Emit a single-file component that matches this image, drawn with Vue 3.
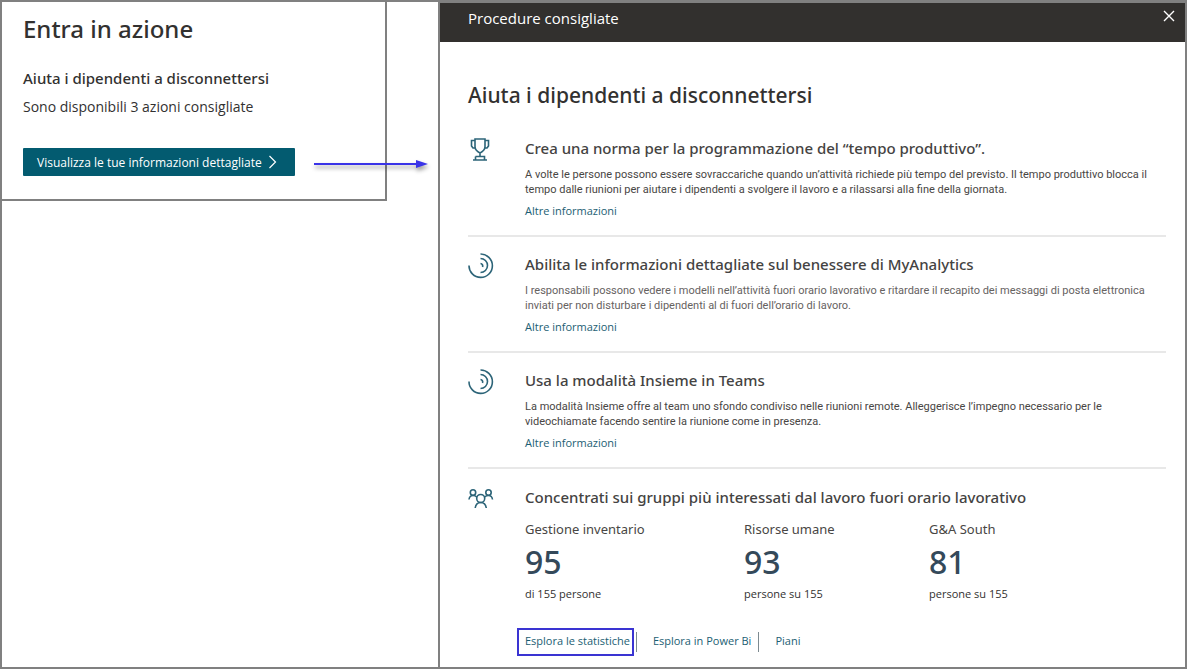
<script setup>
const practices = [
  {
    icon: 'trophy',
    title: 'Crea una norma per la programmazione del “tempo produttivo”.',
    text: 'A volte le persone possono essere sovraccariche quando un’attività richiede più tempo del previsto. Il tempo produttivo blocca il tempo dalle riunioni per aiutare i dipendenti a svolgere il lavoro e a rilassarsi alla fine della giornata.',
  },
  {
    icon: 'spiral',
    light: true,
    title: 'Abilita le informazioni dettagliate sul benessere di MyAnalytics',
    text: 'I responsabili possono vedere i modelli nell’attività fuori orario lavorativo e ritardare il recapito dei messaggi di posta elettronica inviati per non disturbare i dipendenti al di fuori dell’orario di lavoro.',
  },
  {
    icon: 'spiral',
    title: 'Usa la modalità Insieme in Teams',
    text: 'La modalità Insieme offre al team uno sfondo condiviso nelle riunioni remote. Alleggerisce l’impegno necessario per le videochiamate facendo sentire la riunione come in presenza.',
  },
]

const groups = [
  { name: 'Gestione inventario', value: 95, note: 'di 155 persone' },
  { name: 'Risorse umane', value: 93, note: 'persone su 155' },
  { name: 'G&A South', value: 81, note: 'persone su 155' },
]
</script>

<template>
  <div class="page">
    <aside class="side">
      <section class="card">
        <h1>Entra in azione</h1>
        <h2>Aiuta i dipendenti a disconnettersi</h2>
        <p>Sono disponibili 3 azioni consigliate</p>
        <div class="action">
          <button type="button" class="cta">
            <span>Visualizza le tue informazioni dettagliate</span>
            <svg width="9" height="14" viewBox="0 0 9 14" aria-hidden="true">
              <path d="M1.5 1 7.5 7l-6 6" fill="none" stroke="currentColor" stroke-width="1.2" />
            </svg>
          </button>
          <svg class="arrow" width="118" height="16" viewBox="0 0 118 16" aria-hidden="true">
            <path d="M0 8H104" stroke="#3a34e8" stroke-width="2" />
            <path d="M102 4 114 8 102 12Z" fill="#3a34e8" />
          </svg>
        </div>
      </section>
    </aside>

    <section class="panel">
      <header class="bar">
        <span>Procedure consigliate</span>
        <button type="button" class="close" aria-label="Chiudi">
          <svg width="12" height="12" viewBox="0 0 12 12" aria-hidden="true">
            <path d="M1 1 11 11M11 1 1 11" stroke="currentColor" stroke-width="1.4" />
          </svg>
        </button>
      </header>

      <main class="content">
        <h2 class="heading">Aiuta i dipendenti a disconnettersi</h2>

        <article v-for="item in practices" :key="item.title" class="item divided">
          <svg v-if="item.icon === 'trophy'" class="icon" viewBox="0 0 26 26" aria-hidden="true">
            <path d="M7 2H17V9.500Q17 13.500 12 16 7 13.500 7 9.500ZM7 3.500H3.500V9L5 11H7.500M17 3.500H20.500V9L19 11H16.500M12 16V19.500M7.500 19.500H16.500V23M7.500 19.500V23M5 23H19" />
          </svg>
          <svg v-else class="icon" viewBox="0 0 26 26" aria-hidden="true">
            <path d="M12.500 1A11.700 11.700 0 1 1 1 12.500M12.500 5.500A7 7 0 1 1 12.500 19.500M12.500 10.500A2.500 2.500 0 0 1 14.500 14" />
          </svg>
          <div class="body">
            <h3>{{ item.title }}</h3>
            <p class="text" :class="{ light: item.light }">{{ item.text }}</p>
            <a href="#" class="more">Altre informazioni</a>
          </div>
        </article>

        <article class="item">
          <svg class="icon" viewBox="0 0 26 26" aria-hidden="true">
            <circle cx="5" cy="6.500" r="2.700" />
            <circle cx="20.500" cy="6.500" r="2.700" />
            <circle cx="12.700" cy="12.500" r="4" />
            <path d="M1 13.500Q1.500 9.500 5 9.500 7.500 9.500 8.700 11M24.500 13.500Q24 9.500 20.500 9.500 18 9.500 16.800 11M7.200 22Q8 16.500 12.700 16.500 17.500 16.500 18.300 22" />
          </svg>
          <div class="body">
            <h3>Concentrati sui gruppi più interessati dal lavoro fuori orario lavorativo</h3>
            <div class="groups">
              <div v-for="g in groups" :key="g.name">
                <div class="name">{{ g.name }}</div>
                <div class="value">{{ g.value }}</div>
                <div class="note">{{ g.note }}</div>
              </div>
            </div>
            <nav class="links">
              <a href="#" class="selected">Esplora le statistiche</a>
              <a href="#">Esplora in Power Bi</a>
              <a href="#">Piani</a>
            </nav>
          </div>
        </article>
      </main>
    </section>
  </div>
</template>

<style>
body {
  margin: 0;
  background: #fff;
}
</style>

<style scoped>
.page {
  box-sizing: border-box;
  min-height: 100vh;
  display: grid;
  grid-template-columns: 436px minmax(0, 1fr);
  border: 2px solid #808080;
  font-family: "Open Sans", "Noto Sans", sans-serif;
  color: #323130;
}
h1,
h2,
h3,
p {
  margin: 0;
}
h1,
h2,
h3,
.name,
.value {
  font-family: "Noto Sans", "Open Sans", sans-serif;
}
button {
  font-family: inherit;
  border: 0;
  cursor: pointer;
}
a {
  color: #1b5e73;
  text-decoration: none;
}
.side {
  padding-right: 51px;
}
.card {
  padding: 11px 20px 23px 21px;
  border-right: 2px solid #808080;
  border-bottom: 2px solid #808080;
}
.card h1 {
  font-size: 24px;
  line-height: 32px;
  font-weight: 500;
}
.card h2 {
  margin-top: 22px;
  font-size: 15px;
  line-height: 22px;
  font-weight: 500;
}
.card p {
  margin-top: 8px;
  font-size: 14px;
  line-height: 20px;
}
.action {
  position: relative;
  width: max-content;
  margin-top: 31px;
}
.cta {
  display: flex;
  align-items: center;
  gap: 6px;
  height: 28px;
  padding: 0 18px 0 14px;
  border-radius: 1px;
  background: #035b70;
  color: #fff;
  font-size: 12px;
}
.arrow {
  position: absolute;
  left: 100%;
  top: 8px;
  margin-left: 19px;
  filter: drop-shadow(1px 3px 2px rgba(0, 0, 0, 0.4));
}
.panel {
  border-left: 2px solid #808080;
}
.bar {
  display: flex;
  justify-content: space-between;
  align-items: flex-start;
  box-sizing: border-box;
  height: 40px;
  padding: 4px 7px 0 28px;
  border-top: 1px solid #808080;
  background: #32302e;
  color: #fff;
  font-size: 15px;
  line-height: 22px;
}
.close {
  display: flex;
  padding: 3px;
  background: none;
  color: #fff;
}
.content {
  padding: 37px 19px 11px 28px;
}
.heading {
  margin-bottom: 10px;
  font-size: 21px;
  line-height: 32px;
  font-weight: 500;
}
.item {
  display: grid;
  grid-template-columns: 26px minmax(0, 1fr);
  column-gap: 31px;
  padding-top: 17px;
}
.divided {
  padding-top: 16px;
  padding-bottom: 16px;
  border-bottom: 2px solid #e8e8e8;
}
.icon {
  width: 26px;
  height: 26px;
  fill: none;
  stroke: #2c6478;
  stroke-width: 1.6;
}
h3 {
  font-size: 15px;
  line-height: 22px;
  font-weight: 500;
  color: #444342;
}
.text {
  margin-top: 8px;
  font-family: Roboto, "Open Sans", sans-serif;
  font-size: 11px;
  line-height: 15px;
  color: #484644;
}
.light {
  color: #66625f;
}
.more {
  display: block;
  width: max-content;
  margin-top: 6px;
  font-size: 11px;
  line-height: 16px;
}
.groups {
  display: grid;
  grid-template-columns: 219fr 185fr 237fr;
  margin-top: 11px;
}
.name {
  font-size: 13px;
  line-height: 20px;
  color: #484644;
}
.value {
  margin-top: 3px;
  font-size: 32px;
  line-height: 40px;
  font-weight: 500;
  color: #34495a;
}
.note {
  margin-top: 4px;
  font-size: 11px;
  line-height: 16px;
}
.links {
  display: flex;
  align-items: center;
  margin-top: 26px;
  margin-left: -8px;
  font-size: 11px;
  line-height: 18px;
}
.links a {
  padding: 0 7px 2px 16px;
}
.links a + a {
  border-left: 1px solid #7d8a90;
}
.links a.selected {
  margin-right: 2px;
  padding: 2px 2px 4px 6px;
  border: 2px solid #3a34d2;
}
</style>
